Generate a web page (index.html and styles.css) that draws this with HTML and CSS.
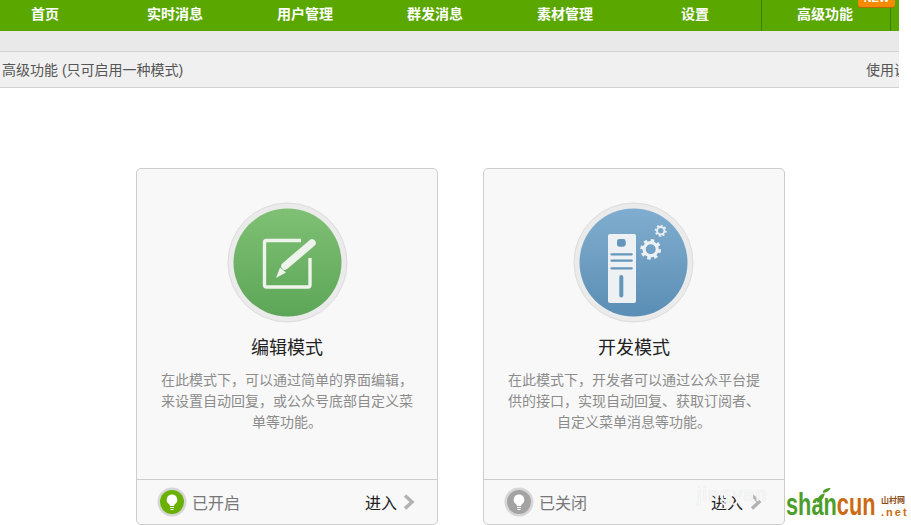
FILE: index.html
```html
<!DOCTYPE html>
<html lang="zh">
<head>
<meta charset="utf-8">
<title>高级功能</title>
<link rel="stylesheet" href="styles.css">
</head>
<body>
<div class="page">
  <nav class="nav">
    <a class="nav-item">首页</a>
    <a class="nav-item">实时消息</a>
    <a class="nav-item">用户管理</a>
    <a class="nav-item">群发消息</a>
    <a class="nav-item">素材管理</a>
    <a class="nav-item">设置</a>
    <a class="nav-item nav-last">高级功能<span class="badge">NEW</span></a>
  </nav>
  <div class="band"></div>
  <div class="titlebar">
    <span class="title-text">高级功能 (只可启用一种模式)</span>
    <span class="help">使用说明</span>
  </div>
  <main class="cards">
    <section class="card">
      <div class="card-body">
        <svg class="mode-icon" width="121" height="121" viewBox="0 0 121 121">
          <defs>
            <linearGradient id="g1" x1="0" y1="0" x2="0" y2="1"><stop offset="0" stop-color="#7fc074"/><stop offset="1" stop-color="#5da658"/></linearGradient>
          </defs>
          <circle cx="60.5" cy="60.5" r="59.5" fill="#ebebeb" stroke="#dcdcdc"/>
          <circle cx="60.5" cy="60.5" r="54" fill="url(#g1)"/>
          <path d="M74 38.5H39.5a2 2 0 0 0-2 2V83a2 2 0 0 0 2 2H81a2 2 0 0 0 2-2V56" fill="none" stroke="#eef3ec" stroke-width="3.4"/>
          <path d="M58 64L85 41" fill="none" stroke="#eef3ec" stroke-width="7.5" stroke-linecap="round"/>
          <path d="M49 76L53 65.5L59 70.5Z" fill="#eef3ec"/>
        </svg>
        <h2 class="card-title">编辑模式</h2>
        <p class="card-desc">在此模式下，可以通过简单的界面编辑，来设置自动回复，或公众号底部自定义菜单等功能。</p>
      </div>
      <footer class="card-foot">
        <svg class="bulb" width="30" height="30" viewBox="0 0 30 30">
          <circle cx="15" cy="15" r="14.5" fill="#d6d6d6"/>
          <circle cx="15" cy="15" r="12" fill="#69b000"/>
          <path d="M15 7.5a5.2 5.2 0 0 0-3 9.5c.7.6.9 1.2.9 2h4.2c0-.8.2-1.4.9-2a5.2 5.2 0 0 0-3-9.5Z" fill="#fff"/>
          <path d="M13 20.5h4M13.5 22.5h3" stroke="#fff" stroke-width="1.2"/>
        </svg>
        <span class="status">已开启</span>
        <a class="enter">进入</a>
        <svg class="chev" width="12" height="16" viewBox="0 0 12 16"><path d="M2 1.5L9 8L2 14.5" fill="none" stroke="#b2b2b2" stroke-width="3.4"/></svg>
      </footer>
    </section>
    <section class="card">
      <div class="card-body">
        <svg class="mode-icon" width="121" height="121" viewBox="0 0 121 121">
          <defs>
            <linearGradient id="g2" x1="0" y1="0" x2="0" y2="1"><stop offset="0" stop-color="#80adcf"/><stop offset="1" stop-color="#5b8eb4"/></linearGradient>
          </defs>
          <circle cx="60.5" cy="60.5" r="59.5" fill="#ebebeb" stroke="#dcdcdc"/>
          <circle cx="60.5" cy="60.5" r="54" fill="url(#g2)"/>
          <rect x="35" y="32" width="28" height="69" rx="2" fill="#eef1f3"/>
          <rect x="44" y="37" width="8.7" height="7.7" rx="2.4" fill="#6495ba"/>
          <path d="M38.5 52.3H58.7M38.5 58.7H58.7M38.5 66.3H58.7" stroke="#6495ba" stroke-width="2.3" stroke-linecap="round"/>
          <rect x="46.3" y="73" width="4" height="22.5" rx="2" fill="#6495ba"/>
          <circle cx="77.7" cy="47.3" r="6.6" fill="none" stroke="#eef1f3" stroke-width="3.2"/>
          <circle cx="77.7" cy="47.3" r="9" fill="none" stroke="#eef1f3" stroke-width="2.8" pathLength="16" stroke-dasharray="1 1"/>
          <circle cx="87.7" cy="28.7" r="3.7" fill="none" stroke="#eef1f3" stroke-width="1.9"/>
          <circle cx="87.7" cy="28.7" r="5.2" fill="none" stroke="#eef1f3" stroke-width="1.6" pathLength="16" stroke-dasharray="1 1"/>
        </svg>
        <h2 class="card-title">开发模式</h2>
        <p class="card-desc">在此模式下，开发者可以通过公众平台提供的接口，实现自动回复、获取订阅者、自定义菜单消息等功能。</p>
      </div>
      <footer class="card-foot">
        <svg class="bulb" width="30" height="30" viewBox="0 0 30 30">
          <circle cx="15" cy="15" r="14.5" fill="#d6d6d6"/>
          <circle cx="15" cy="15" r="12" fill="#a3a3a3"/>
          <path d="M15 7.5a5.2 5.2 0 0 0-3 9.5c.7.6.9 1.2.9 2h4.2c0-.8.2-1.4.9-2a5.2 5.2 0 0 0-3-9.5Z" fill="#fff"/>
          <path d="M13 20.5h4M13.5 22.5h3" stroke="#fff" stroke-width="1.2"/>
        </svg>
        <span class="status">已关闭</span>
        <a class="enter">进入</a>
        <svg class="chev" width="12" height="16" viewBox="0 0 12 16"><path d="M2 1.5L9 8L2 14.5" fill="none" stroke="#b2b2b2" stroke-width="3.4"/></svg>
      </footer>
    </section>
  </main>
  <span class="watermark">jingyan</span>
</div>
<div class="logo">
  <svg class="leaf" width="18" height="17" viewBox="0 0 24 22">
    <path d="M3 21C2 13 8 9 13 8C12 14 9 19 3 21Z" fill="#4c9e2b"/>
    <path d="M10 7C11 3 15 1 21 1C19 5 15 8 10 7Z" fill="#4c9e2b"/>
  </svg>
  <span class="logo-main"><span class="logo-green">shan</span><span class="logo-orange">cun</span></span>
  <span class="logo-side"><span class="logo-cn">山村网</span><span class="logo-net">.net</span></span>
</div>
</body>
</html>
```
FILE: styles.css
```css
* { box-sizing: border-box; }
html, body { margin: 0; padding: 0; background: #fff; }
body {
  position: relative;
  font-family: "Liberation Sans", "Noto Sans CJK SC", sans-serif;
  width: 911px;
  height: 525px;
  overflow: hidden;
}
.page {
  position: relative;
  width: 899px;
  height: 525px;
  overflow: hidden;
}
.nav {
  display: flex;
  height: 31px;
  background: #5aa700;
}
.nav-item {
  flex: 0 0 130px;
  text-align: center;
  color: #fff;
  font-size: 14px;
  font-weight: 700;
  line-height: 28px;
}
.nav-item:first-child { margin-left: -20px; }
.nav-last {
  position: relative;
  margin-left: 1px;
  padding-right: 2px;
  border-left: 1px solid #3f7d05;
  border-right: 1px solid #3f7d05;
}
.badge {
  position: absolute;
  left: 96px;
  top: -9px;
  width: 37px;
  height: 16px;
  background: #f78b00;
  border-radius: 3px;
  box-shadow: 0 1px 0 #b9690a;
  font-size: 11px;
  font-weight: 700;
  line-height: 15px;
}
.band {
  height: 20px;
  background: #e9e9e9;
}
.titlebar {
  display: flex;
  justify-content: space-between;
  height: 37px;
  padding-left: 2px;
  background: #f0f0f0;
  border-top: 1px solid #d3d3d3;
  border-bottom: 1px solid #d3d3d3;
  color: #555;
  font-size: 14px;
  line-height: 37px;
  white-space: nowrap;
}
.help { margin-right: -23px; }
.cards {
  display: flex;
  gap: 45px;
  padding: 80px 0 0 136px;
}
.card {
  display: flex;
  flex-direction: column;
  width: 302px;
  height: 357px;
  background: #f8f8f8;
  border: 1px solid #cdcdcd;
  border-radius: 5px;
}
.card-body {
  height: 311px;
  padding-top: 33px;
  text-align: center;
  border-bottom: 1px solid #cdcdcd;
}
.mode-icon { display: block; margin-left: 90px; }
.card + .card .mode-icon { margin-left: 89px; }
.card-title {
  margin: 12px 0 0;
  font-size: 18px;
  font-weight: 400;
  line-height: 26px;
  color: #222;
}
.card-desc {
  margin: 9px 0 0;
  padding: 0 22px;
  font-size: 14px;
  line-height: 21px;
  color: #8c8c8c;
}
.card-foot {
  display: flex;
  align-items: center;
  flex: 1;
  padding: 0 22px 0 20px;
  font-size: 16px;
}
.bulb { flex: none; }
.status { margin-left: 5px; color: #777; }
.enter { margin-left: auto; color: #222; }
.chev { margin-left: 6px; }
.card + .card .chev { margin-left: 7px; }
.watermark {
  position: absolute;
  left: 697px;
  top: 483px;
  font-size: 20px;
  letter-spacing: 1px;
  color: #f7f7f7;
  text-shadow: 0 0 1px #d8d8d8;
}
.logo {
  position: absolute;
  left: 786px;
  top: 484px;
  display: flex;
  align-items: flex-end;
  width: 122px;
  height: 39px;
  background: #fff;
}
.leaf { position: absolute; left: 29px; top: 3px; z-index: 1; }
.logo-main {
  display: block;
  width: 95px;
  flex: none;
  font-size: 32px;
  font-weight: 700;
  line-height: 38px;
  white-space: nowrap;
  transform: scaleX(.68);
  transform-origin: 0 50%;
}
.logo-green { color: #4c9e2b; }
.logo-orange { color: #cc6a14; }
.logo-side {
  display: flex;
  flex-direction: column;
  align-items: flex-start;
  flex: 1;
  line-height: 1;
  padding-bottom: 5px;
}
.logo-cn { font-size: 8px; color: #8b4a16; font-weight: 700; margin-bottom: 2px; }
.logo-net { font-size: 11px; color: #cc6a14; font-weight: 700; letter-spacing: 2px; }
```
